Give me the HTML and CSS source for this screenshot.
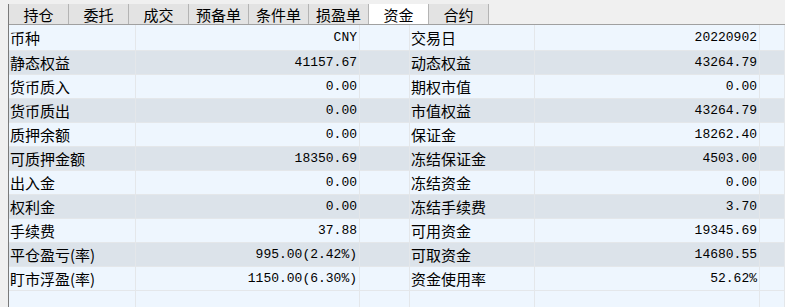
FILE: index.html
```html
<!DOCTYPE html>
<html lang="zh-CN">
<head>
    <meta charset="UTF-8">
    <title>资金</title>
    <link rel="stylesheet" href="styles.css">
</head>
<body>
    <div class="panel">
        <!-- tab strip -->
        <div class="tabs">
            <div class="tab">持仓</div>
            <div class="tab">委托</div>
            <div class="tab">成交</div>
            <div class="tab">预备单</div>
            <div class="tab">条件单</div>
            <div class="tab">损盈单</div>
            <div class="tab active">资金</div>
            <div class="tab">合约</div>
        </div>

        <!-- account grid -->
        <div class="grid">
            <div class="row first">
                <div class="cell label">币种</div><div class="cell num">CNY</div><div class="cell"></div>
                <div class="cell label">交易日</div><div class="cell num">20220902</div><div class="cell"></div>
            </div>
            <div class="row alt">
                <div class="cell label">静态权益</div><div class="cell num">41157.67</div><div class="cell"></div>
                <div class="cell label">动态权益</div><div class="cell num">43264.79</div><div class="cell"></div>
            </div>
            <div class="row">
                <div class="cell label">货币质入</div><div class="cell num">0.00</div><div class="cell"></div>
                <div class="cell label">期权市值</div><div class="cell num">0.00</div><div class="cell"></div>
            </div>
            <div class="row alt">
                <div class="cell label">货币质出</div><div class="cell num">0.00</div><div class="cell"></div>
                <div class="cell label">市值权益</div><div class="cell num">43264.79</div><div class="cell"></div>
            </div>
            <div class="row">
                <div class="cell label">质押余额</div><div class="cell num">0.00</div><div class="cell"></div>
                <div class="cell label">保证金</div><div class="cell num">18262.40</div><div class="cell"></div>
            </div>
            <div class="row alt">
                <div class="cell label">可质押金额</div><div class="cell num">18350.69</div><div class="cell"></div>
                <div class="cell label">冻结保证金</div><div class="cell num">4503.00</div><div class="cell"></div>
            </div>
            <div class="row">
                <div class="cell label">出入金</div><div class="cell num">0.00</div><div class="cell"></div>
                <div class="cell label">冻结资金</div><div class="cell num">0.00</div><div class="cell"></div>
            </div>
            <div class="row alt">
                <div class="cell label">权利金</div><div class="cell num">0.00</div><div class="cell"></div>
                <div class="cell label">冻结手续费</div><div class="cell num">3.70</div><div class="cell"></div>
            </div>
            <div class="row">
                <div class="cell label">手续费</div><div class="cell num">37.88</div><div class="cell"></div>
                <div class="cell label">可用资金</div><div class="cell num">19345.69</div><div class="cell"></div>
            </div>
            <div class="row alt">
                <div class="cell label">平仓盈亏(率)</div><div class="cell num">995.00(2.42%)</div><div class="cell"></div>
                <div class="cell label">可取资金</div><div class="cell num">14680.55</div><div class="cell"></div>
            </div>
            <div class="row">
                <div class="cell label">盯市浮盈(率)</div><div class="cell num">1150.00(6.30%)</div><div class="cell"></div>
                <div class="cell label">资金使用率</div><div class="cell num">52.62%</div><div class="cell"></div>
            </div>
            <!-- empty filler row -->
            <div class="row">
                <div class="cell"></div><div class="cell"></div><div class="cell"></div>
                <div class="cell"></div><div class="cell"></div><div class="cell"></div>
            </div>
        </div>
    </div>
</body>
</html>
```

FILE: styles.css
```css
body, html {
    margin: 0;
    padding: 0;
    height: 100%;
    overflow: hidden;
    background-color: #f0f0f0;
    color: #000;
    font-family: "Noto Sans CJK SC", "Liberation Sans", sans-serif;
    font-size: 15px;
}

.panel {
    margin: 4px 0 0 8px;
    border-left: 1px solid #7a7a7a;
    height: 100%;
}

/* tab strip */
.tabs {
    display: flex;
    border-bottom: 1px solid #a0a0a0;
}

.tab {
    width: 60px;
    height: 20px;
    box-sizing: border-box;
    background-color: #e3e3e3;
    border-right: 1px solid #b4b4b4;
    display: flex;
    align-items: center;
    justify-content: center;
    line-height: 1;
}

.tab.active {
    background-color: #fff;
}

/* account grid */
.row {
    display: grid;
    grid-template-columns: 127px 224px 50px 125px 225px 1fr;
    height: 24px;
    background-color: #eef6fe;
}

.row.first {
    height: 26px;
}

.row.alt {
    background-color: #dce3ea;
}

.cell {
    box-sizing: border-box;
    border-right: 1px solid #e4e7ea;
    border-bottom: 1px solid #e4e7ea;
    display: flex;
    align-items: center;
    white-space: nowrap;
    line-height: 1;
}

.label {
    padding-left: 1px;
}

.num {
    justify-content: flex-end;
    padding-right: 2px;
    font-family: "Liberation Mono", monospace;
    font-size: 13px;
}
```
